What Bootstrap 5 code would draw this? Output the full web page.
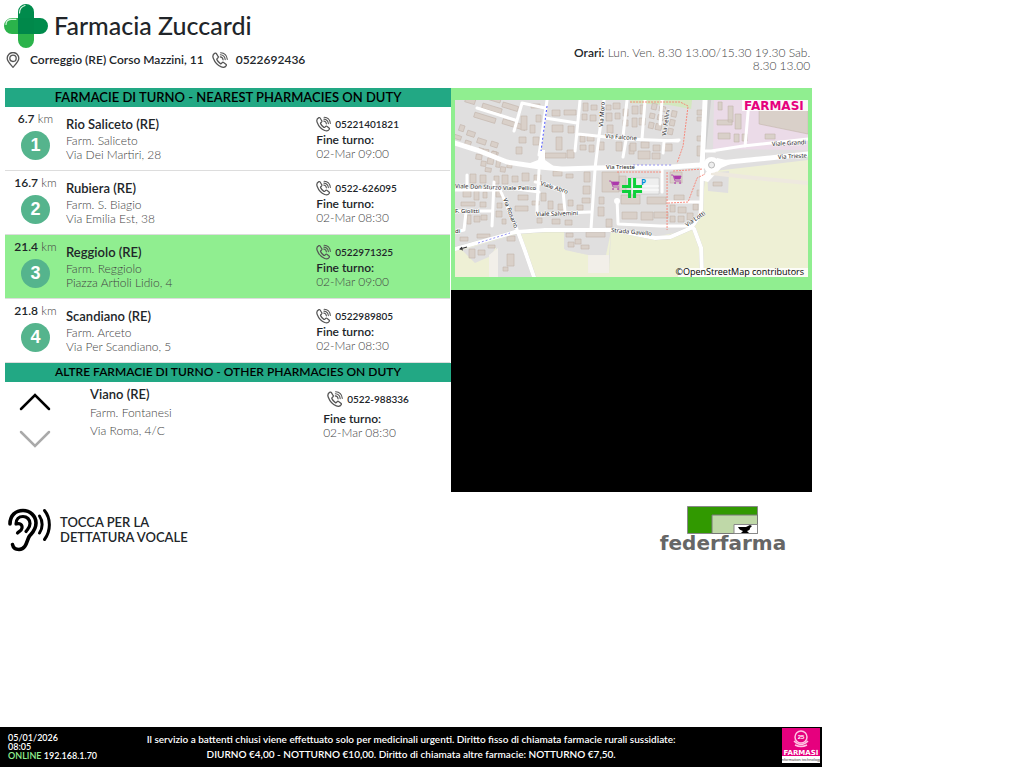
<!DOCTYPE html>
<html lang="it">
<head>
<meta charset="utf-8">
<meta name="viewport" content="width=device-width, initial-scale=1">
<title>Farmacia Zuccardi</title>
<link href="https://cdn.jsdelivr.net/npm/bootstrap@5.3.0/dist/css/bootstrap.min.css" rel="stylesheet">
<style>
body{font-family:Lato,"Open Sans",sans-serif;font-size:12px;line-height:14px;color:#212529;background:#fff}
.board{width:80.3%}
.topbar{height:88px;padding:4px 12px 0 4px}
.brand-line{gap:6px}
.brand-name{font-size:25px;line-height:42px;font-weight:500}
.strong-text{font-weight:600;color:#212529}
.soft{color:#444;font-weight:300}
.hours{width:240px;line-height:13px;padding-top:42px}
.panels{display:grid;grid-template-columns:446fr 361fr;padding:0 10px 0 5px}
.bar{background:#22a884;color:#000;font-size:12px;font-weight:600;line-height:18px;height:19px}
.bar-main{font-size:13px}
.duty{height:64px;border-bottom:1px solid #ddd;margin-right:1px}
.duty.on{background:#90ee90}
.dist{width:61px;padding-top:5px}
.num{width:29px;height:29px;border-radius:50%;background:#55b48d;color:#fff;font:bold 18px/29px "Liberation Sans",sans-serif;margin-top:5px}
.place{padding-top:8px}
.place .strong-text{font-size:13px;line-height:19px}
.turn{width:134px;padding-top:8px}
.tel{font-size:10px;height:18px;font-weight:600}
.tel svg,.addr svg{flex:none}
.others{padding-top:3px}
.arrows{width:60px}
.arrows button{border:0;background:none;padding:0 0 4px;height:37px;width:34px}
.others .place{padding:0 0 0 25px;line-height:18px}
.others .turn{width:128px;padding-top:5px}
.mapbox{background:#90ee90;padding:12px 4px 13px}
.mapbox svg{display:block;width:100%}
.screen{background:#000;min-height:202px}
.voice{border:0;background:none;padding:2px 0 0;font-size:13px;font-weight:600;line-height:15px;color:#212529}
.foot{background:#000;color:#fff;height:40px;margin-bottom:1px;font-weight:600}
.stamp{font-size:9px;line-height:9px;width:112px;padding:6px 0 0 8px}
.notice{font-size:10px;line-height:15px;padding-top:5px}
.online{color:#90ee90}
.maker{width:112px}
.maker svg{margin-right:2px}
.bld{fill:#d9d0c9;stroke:#c3b5ab;stroke-width:.6}
.road{fill:none;stroke:#fff;stroke-width:3;stroke-linejoin:round;stroke-linecap:round}
.case{fill:none;stroke:#cfcfcf;stroke-width:4.2;stroke-linejoin:round;stroke-linecap:round}
.street{font:6px "Noto Sans",sans-serif;fill:#222;paint-order:stroke;stroke:#fff;stroke-width:1px}
</style>
</head>
<body class="d-flex flex-column min-vh-100">
<svg width="0" height="0" class="position-absolute" aria-hidden="true">
<symbol id="phone" viewBox="0 0 16 16">
<path d="M3.1 1.2C1 2.2.5 4.300 1.300 6.300 2.700 10 5.800 13.500 9.300 14.900c2 .8 3.900.4 4.900-1.300.3-.6.2-1-.3-1.400l-2.300-1.700c-.5-.4-1-.3-1.400.1l-.8.900c-.3.300-.6.300-1 .1C6.900 10.700 5.700 9.300 4.900 7.600c-.2-.4-.1-.7.200-1l.9-.8c.4-.4.4-.9.100-1.300L4.400 1.600c-.3-.5-.8-.6-1.300-.4Z" fill="none" stroke="#555" stroke-width="1.300"/>
<path d="M8.200 4.900c1.700.2 2.700 1.200 2.900 3M8.400 2.800c2.800.2 4.500 2 4.800 4.800M8.600.8c3.900.2 6.300 2.600 6.700 6.600" fill="none" stroke="#555" stroke-width="1.100" stroke-linecap="round"/>
</symbol>
</svg>

<header class="board topbar d-flex justify-content-between">
  <div>
    <div class="brand-line d-flex">
      <svg width="44" height="44" viewBox="0 0 44 44" aria-hidden="true">
        <path d="M14 14V8a8 8 0 0 1 16 0v6h6a8 8 0 0 1 0 16H14Z" fill="#008b4c"/>
        <path d="M14 14v16h16v6a8 8 0 0 1-16 0v-6H8a8 8 0 0 1 0-16Z" fill="#2bb34b"/>
        <path d="M14 14h16v16H14Z" fill="#00884a"/>
        <path d="M15.500 9c0-4 2-6.500 5.500-7.500M2 20.500c0-3 2-5 5-5.200h5" fill="none" stroke="#d8f5df" stroke-width="1.200" stroke-linecap="round"/>
      </svg>
      <h1 class="brand-name m-0">Farmacia Zuccardi</h1>
    </div>
    <div class="addr d-flex align-items-center strong-text pt-1">
      <svg width="18" height="16" viewBox="0 0 18 16" aria-hidden="true"><path d="M9 15.200C6 12 3.200 9.500 3.200 6.300a5.800 5.800 0 0 1 11.600 0C14.800 9.500 12 12 9 15.200Z" fill="none" stroke="#555" stroke-width="1.300"/><circle cx="9" cy="6.300" r="3.200" fill="none" stroke="#555" stroke-width="1.300"/></svg>
      <span class="ps-1 ms-1">Correggio (RE) Corso Mazzini, 11</span>
      <svg class="mx-2" width="16" height="16" aria-hidden="true"><use href="#phone"/></svg>
      <span>0522692436</span>
    </div>
  </div>
  <div class="hours text-end soft"><span class="strong-text">Orari:</span> Lun. Ven. 8.30 13.00/15.30 19.30 Sab. 8.30 13.00</div>
</header>

<main class="board">
  <div class="panels">
    <section>
      <h2 class="bar bar-main m-0 text-center">FARMACIE DI TURNO - NEAREST PHARMACIES ON DUTY</h2>
      <div class="duty d-flex">
        <div class="dist text-center soft"><span class="strong-text">6.7</span> km<div class="num mx-auto">1</div></div>
        <div class="place flex-fill soft"><div class="strong-text">Rio Saliceto (RE)</div>Farm. Saliceto<br>Via Dei Martiri, 28</div>
        <div class="turn soft"><div class="tel strong-text d-flex align-items-center"><svg class="me-1" width="15" height="16"><use href="#phone"/></svg>05221401821</div><div class="strong-text">Fine turno:</div>02-Mar 09:00</div>
      </div>
      <div class="duty d-flex">
        <div class="dist text-center soft"><span class="strong-text">16.7</span> km<div class="num mx-auto">2</div></div>
        <div class="place flex-fill soft"><div class="strong-text">Rubiera (RE)</div>Farm. S. Biagio<br>Via Emilia Est, 38</div>
        <div class="turn soft"><div class="tel strong-text d-flex align-items-center"><svg class="me-1" width="15" height="16"><use href="#phone"/></svg>0522-626095</div><div class="strong-text">Fine turno:</div>02-Mar 08:30</div>
      </div>
      <div class="duty on d-flex">
        <div class="dist text-center soft"><span class="strong-text">21.4</span> km<div class="num mx-auto">3</div></div>
        <div class="place flex-fill soft"><div class="strong-text">Reggiolo (RE)</div>Farm. Reggiolo<br>Piazza Artioli Lidio, 4</div>
        <div class="turn soft"><div class="tel strong-text d-flex align-items-center"><svg class="me-1" width="15" height="16"><use href="#phone"/></svg>0522971325</div><div class="strong-text">Fine turno:</div>02-Mar 09:00</div>
      </div>
      <div class="duty d-flex">
        <div class="dist text-center soft"><span class="strong-text">21.8</span> km<div class="num mx-auto">4</div></div>
        <div class="place flex-fill soft"><div class="strong-text">Scandiano (RE)</div>Farm. Arceto<br>Via Per Scandiano, 5</div>
        <div class="turn soft"><div class="tel strong-text d-flex align-items-center"><svg class="me-1" width="15" height="16"><use href="#phone"/></svg>0522989805</div><div class="strong-text">Fine turno:</div>02-Mar 08:30</div>
      </div>
      <h2 class="bar m-0 text-center">ALTRE FARMACIE DI TURNO - OTHER PHARMACIES ON DUTY</h2>
      <div class="others d-flex">
        <div class="arrows d-flex flex-column align-items-center">
          <button type="button" aria-label="Precedente"><svg width="34" height="20" viewBox="0 0 34 20"><path d="M3 17 17 3l14 14" fill="none" stroke="#000" stroke-width="2.500" stroke-linecap="round"/></svg></button>
          <button type="button" aria-label="Successiva"><svg width="34" height="20" viewBox="0 0 34 20"><path d="M3 3l14 14L31 3" fill="none" stroke="#aaa" stroke-width="2.500" stroke-linecap="round"/></svg></button>
        </div>
        <div class="place flex-fill soft"><div class="strong-text">Viano (RE)</div>Farm. Fontanesi<br>Via Roma, 4/C</div>
        <div class="turn soft"><div class="tel strong-text d-flex align-items-center ms-1"><svg class="me-1" width="16" height="16"><use href="#phone"/></svg>0522-988336</div><div class="strong-text pt-1">Fine turno:</div>02-Mar 08:30</div>
      </div>
    </section>
    <section class="d-flex flex-column">
      <div class="mapbox">
<svg viewBox="0 0 353 177" role="img" aria-label="Mappa">
<rect width="353" height="177" fill="#e0dfdf"/>
<path d="M0 149 62 131 77 177H0ZM64 131 156 130 154 156 133 155 109 148 109 131ZM65 131H110V150L133 155V173H154L156 131 200 137 228 131 246 113 251 72 353 60V177H78Z" fill="#eef0d5"/>
<path d="M7 150 20 163 36 156 41 147 43 177H78L62 134Z" fill="#e0dfdf"/><path d="M34 155 43 148V177H34Z" fill="#f2efe9"/>
<path d="M109 131H156L151 155H133L109 149Z" fill="#e0dfdf"/><path d="M133 155h21v18h-21Z" fill="#f2efe9"/>
<path d="M252 73 274 71 273 93 253 91Z" fill="#e0dfdf"/>
<path d="M259 0H353V50L258 49Z" fill="#ebdbe8"/>
<path d="M175 0h62l-1 9-22-4-39-2Z" fill="#cdebb0" opacity=".7"/>
<path d="M304 0h49v34l-49-10Z" class="bld"/>
<g class="bld">
<g transform="rotate(17 40 12)"><path d="M8 6h10v5H8ZM21 18h22v5H21ZM26 7h20v5H26ZM45 0h16v5H45ZM50 16h24v5H50ZM30-3h12v5H30Z"/></g>
<g transform="rotate(18 12 33)"><path d="M3 27h5v6H3ZM12 30h8v5h-8ZM1 38h7v4H1ZM13 40h6v5h-6ZM24 34h9v5h-9ZM38 33h7v5h-7ZM28 43h5v5h-5ZM42 42h6v5h-6Z"/></g>
<path d="M66 16h6v14h-6ZM75 25h5v8h-5ZM64 37h7v6h-7ZM78 37h6v8h-6ZM61 47h6v7h-6ZM81 15h5v7h-5ZM76 4h9v4h-9Z"/>
<path d="M97 10h8v6h-8ZM109 10h12v5h-12ZM97 25h11v7H97ZM101 37h6v13h-6ZM113 26h6v7h-6ZM90 53h21v5H90ZM112 50h7v8h-7Z"/>
<path d="M128 3h5v8h-5ZM136 5h6v5h-6ZM127 14h5v6h-5ZM135 15h6v6h-6ZM125 36h5v6h-5ZM132 36h7v5h-7ZM125 45h6v5h-6ZM134 45h5v7h-5ZM144 42h5v8h-5Z"/>
<path d="M151 5h5v5h-5ZM158 3h7v6h-7ZM151 13h6v8h-6ZM160 13h5v6h-5ZM152 25h6v8h-6ZM168 9h5v7h-5ZM168 20h5v6h-5ZM177 6h6v8h-6ZM185 5h4v9h-4ZM177 18h5v9h-5ZM184 18h6v7h-6ZM161 42h6v9h-6ZM174 45h5v9h-5Z"/>
<g transform="rotate(12 205 15)"><path d="M195 5h5v6h-5ZM203 6h6v5h-6ZM195 15h5v5h-5ZM203 15h6v5h-6ZM196 24h5v6h-5ZM203 24h6v6h-6ZM216 8h5v6h-5ZM216 17h5v6h-5ZM216 26h5v6h-5Z"/></g>
<g transform="rotate(8 35 57)"><path d="M21 56h6v5h-6ZM27 62h5v5h-5ZM33 58h6v6h-6ZM42 57h4v9h-4ZM47 65h5v5h-5ZM36 51h5v5h-5ZM27 50h6v5h-6ZM53 59h5v6h-5ZM32 68h6v4h-6Z"/></g>
<path d="M15 74h6v9h-6ZM25 75h6v8h-6ZM39 76h5v8h-5ZM47 75h6v9h-6ZM57 76h6v6h-6ZM67 73h7v8h-7ZM79 75h7v8h-7ZM98 71h9v5h-9ZM111 74h7v4h-7ZM129 72h6v10h-6ZM128 86h7v8h-7ZM127 98h8v5h-8Z"/>
<path d="M8 91h8v6H8ZM19 91h5v9h-5ZM28 92h4v6h-4ZM6 102h14v4H6ZM25 102h6v5h-6ZM41 91h6v6h-6ZM42 103h5v5h-5ZM12 115h4v9h-4ZM19 116h6v6h-6ZM26 115h6v5h-6ZM41 111h6v6h-6ZM47 119h4v5h-4ZM63 95h10v5H63ZM60 106h13v5H60ZM77 101h7v4h-7ZM86 93h5v8h-5ZM93 101h5v8h-5ZM103 104h6v6h-6ZM113 100h5v6h-5ZM122 105h6v5h-6ZM82 118h5v5h-5ZM97 119h8v5h-8ZM110 120h7v5h-7Z"/>
<path d="M147 72h17v20h-17ZM164 76h7v15h-7ZM144 97h5v7h-5ZM143 107h6v9h-6ZM151 119h6v8h-6ZM166 95h19v9h-19ZM192 97h19v7h-19ZM167 112h15v7h-15ZM186 112h12v8h-12ZM199 112h14v6h-14Z"/>
<path d="M175 43h6v8h-6ZM183 51h12v8h-12ZM186 42h8v6h-8ZM198 45h7v6h-7ZM197 53h8v6h-8ZM209 44h8v7h-8ZM242 10h6v5h-6ZM242 17h11v4h-11ZM247 26h4v6h-4ZM242 36h8v5h-8ZM242 46h6v10h-6ZM263 2h4v8h-4ZM273 6h5v16h-5ZM262 20h15v5h-15ZM263 33h12v6h-12ZM280 14h6v15h-6ZM279 34h5v8h-5ZM287 34h5v7h-5ZM310 34h10v5h-10Z"/>
<path d="M215 72h12v11h-12ZM219 95h10v5h-10ZM242 90h5v6h-5ZM258 82h9v4h-9ZM215 105h5v7h-5ZM223 107h8v6h-8ZM238 104h5v6h-5ZM215 116h5v6h-5ZM223 116h6v6h-6ZM232 113h6v7h-6Z"/>
<path d="M131 132h19v5h-19ZM111 133h7v4h-7ZM120 139h6v5h-6ZM126 145h8v4h-8ZM113 142h6v5h-6ZM52 154h7v12h-7ZM48 167h5v4h-5ZM52 136h8v5h-8ZM14 149h6v9h-6ZM23 150h7v5h-7ZM33 145h7v3h-7ZM22 134h13v4H22ZM5 137h8v4H5Z"/>
</g>
<g class="case"><path d="M0 43 22 50 52 62 85 67 107 69 140 68 217 67 244 65 353 54M0 149 60 132 90 130 160 130 200 138 215 137 236 128 246 113 247 70 249 48 254 0M63 132 70 151 79 177M239 129 246 148 247 177"/></g>
<g class="road"><path d="M22 8 60 20M59 31 67 3 90 8M84 55 92 0M90 18 122 23M125 0 120 51M123 34 170 39 223 41M144 36 149 0M140 68 144 36M168 36 172 0M171 40 168 57M187 38 190 0M207 68 207 92M208 53 209 41 224 40M207 0 205 24M12 75 12 90M0 90 46 90M46 92 63 132M39 82 37 126M0 111 36 111M11 112 9 130 0 132M55 88 84 92M84 70 82 105 82 114 135 112M80 82 92 84 108 91 110 112M140 69 136 128M162 100 163 124 205 126 236 126M213 102h33l-1 12M256 51 288 46 353 39M250 51h10M290 46 294 0"/></g>
<path d="M0 43 22 50 52 62 85 67 107 69 140 68 217 67 244 65 353 54M247 67 250 0" class="road" style="stroke-width:5"/>
<path d="M0 149 60 132 90 130 160 130 200 138 215 137 236 128 246 113 247 70M63 132 70 151 79 177M239 129 246 148 247 177" class="road" style="stroke-width:4"/>
<path d="M70 65 83 60 85 50 90 50 90 60 100 67ZM262 58 280 62 266 68 253 82 245 80Z" fill="#fff"/>
<circle cx="162" cy="101" r="3" fill="#fff"/>
<path d="M176 78h28v16h-28Z" fill="#eee" stroke="#bbb" stroke-width=".5"/><path d="M177 86h27M178 90h26" stroke="#fff"/>
<path d="M256 73 300 78 353 83" fill="none" stroke="#eee9df" stroke-width="4"/>
<path d="M92 6 86 51" stroke="#4b55ff" stroke-dasharray="2 2" fill="none"/><path d="M23 143 55 133M178 65h40" stroke="#7777ee" stroke-width=".8" stroke-dasharray="2 2"/>
<path d="M162 72h44M212 72v58M213 103l20-1 9-24 8-4M218 71l30-2M175 2h50l8 4-5 40-6 17" fill="none" stroke="#f88072" stroke-width=".9" stroke-dasharray="2 1"/>
<circle cx="256.500" cy="65" r="8" fill="#fff"/><circle cx="256.500" cy="65" r="3" fill="#eee" stroke="#aaa" stroke-width=".8"/>
<g id="cart" fill="none" stroke="#ac39ac" stroke-width=".8"><path d="M154 81h2l2 6h6"/><path d="M157 82h7l-1 3h-5Z" fill="#ac39ac"/><circle cx="158" cy="89" r=".6"/><circle cx="163" cy="89" r=".6"/></g>
<use href="#cart" x="62" y="-6"/>
<g class="street">
<text x="151" y="69">Via Trieste</text><text x="150" y="38" transform="rotate(4 150 38)">Via Falcone</text><text transform="translate(148 27) rotate(-86)">Via Moro</text><text transform="translate(211 36) rotate(-82)">Via Fellini</text>
<text x="0" y="88" transform="rotate(2 0 88)">Viale Don Sturzo</text><text x="48" y="90">Viale Pellico</text><text transform="translate(85 85) rotate(18)">Viale Abro</text><text transform="translate(48 99) rotate(69)">Via Rosario</text><text x="0" y="113">F. Giolitti</text><text x="0" y="133">di</text><text x="81" y="116" transform="rotate(-1 81 116)">Viale Salvemini</text><text transform="translate(156 132) rotate(5)">Strada Gavello</text><text transform="translate(232 127) rotate(-35)">Via Lotti</text><text transform="translate(317 46) rotate(-3)">Viale Grandi</text><text transform="translate(323 59) rotate(-3)">Via Trieste</text>
</g>
<path d="M12 147 5 149m2-2-2 2 3 1" stroke="#333" fill="none"/>
<text x="186" y="85" fill="#0092da" style="font:bold 8px 'Noto Sans',sans-serif">P</text>
<path d="M173 78v7h-6v3h9v-10ZM178 78v10h9v-3h-6v-7ZM167 90v3h6v5h3v-8ZM178 90v8h3v-5h6v-3Z" fill="#0fd03b"/>
<path d="M287 0h66v11h-66Z" fill="#fff" opacity=".85"/>
<text x="289" y="10" fill="#e6007e" style="font:bold 12px 'DejaVu Sans',sans-serif">FARMASI</text>
<path d="M223 168h130v9H223Z" fill="#fff" opacity=".8"/>
<text x="349" y="175" text-anchor="end" style="font:9px 'Open Sans',Lato,sans-serif">©OpenStreetMap contributors</text>
</svg>
      </div>
      <div class="screen flex-fill"></div>
    </section>
  </div>
  <div class="d-flex justify-content-between px-2 pt-2">
    <button type="button" class="voice d-flex align-items-center gap-2 text-start">
      <svg width="44" height="44" viewBox="0 0 44 44" fill="none" stroke="#000" stroke-width="3.600" stroke-linecap="round" aria-hidden="true"><path d="M2 16C2 7 8 2.500 15 2.500S28 8 28 15c0 7-4 10-6.500 13S19 41 11 41.500c-4 0-6-2.500-6.500-5"/><path d="M8 16c0-5 3-7.500 7-7.500s7 3 7 7-2 5-4 8M8 16c4-1.500 6.500 1 6 4s-3 3-4.500 5" stroke-width="3.200"/><path d="M31.500 8c3.500 5 3.500 12 0 17M36.500 2.500c6.500 8 6.500 20 0 29" stroke-width="3"/></svg>
      <span>TOCCA PER LA<br>DETTATURA VOCALE</span>
    </button>
    <svg width="181" height="58" viewBox="0 0 181 58" role="img" aria-label="federfarma">
      <path d="M54.500 6.500h70v27h-70Z" fill="#319900" stroke="#888"/><path d="M79 15h45.500v18.500H79Z" fill="#bfd8a8" stroke="#777"/><path d="M101 24.500h23.500v9H101Z" fill="#fff" stroke="#888"/>
      <path d="M105 27h8l4-2 2 1-2 2c0 2-1 2-3 3l2 2h-8l2-2c-3-1-4-2-5-4Z" fill="#000"/>
      <text x="90" y="50" text-anchor="middle" fill="#666" style="font:bold 20px 'DejaVu Sans',sans-serif">federfarma</text>
    </svg>
  </div>
</main>

<footer class="board foot d-flex mt-auto">
  <div class="stamp">05/01/2026<br>08:05<br><span class="online">ONLINE</span> 192.168.1.70</div>
  <div class="notice flex-fill text-center">Il servizio a battenti chiusi viene effettuato solo per medicinali urgenti. Diritto fisso di chiamata farmacie rurali sussidiate:<br>DIURNO €4,00 - NOTTURNO €10,00. Diritto di chiamata altre farmacie: NOTTURNO €7,50.</div>
  <div class="maker text-end">
    <svg width="38" height="36" viewBox="0 0 38 36" role="img" aria-label="Farmasi"><path d="M0 1h38v28H0Z" fill="#e6007e"/><path d="M0 29h38v7H0Z" fill="#fff"/>
      <circle cx="19" cy="10" r="6" fill="none" stroke="#ffc2e2" stroke-width="1.500"/><path d="M12 14q7 7 14 0M13 18q6 3 12 0" fill="none" stroke="#ffc2e2" stroke-width="1.500"/>
      <text x="19" y="12" text-anchor="middle" fill="#fff" style="font:bold 6px 'Liberation Sans',sans-serif">25</text>
      <text x="19" y="28" text-anchor="middle" fill="#fff" style="font:bold 7px 'DejaVu Sans',sans-serif">FARMASI</text>
      <text x="19" y="34" text-anchor="middle" fill="#444" style="font:4px 'Liberation Sans',sans-serif">information technology</text></svg>
  </div>
</footer>
<script src="https://cdn.jsdelivr.net/npm/bootstrap@5.3.0/dist/js/bootstrap.bundle.min.js"></script>
</body>
</html>
